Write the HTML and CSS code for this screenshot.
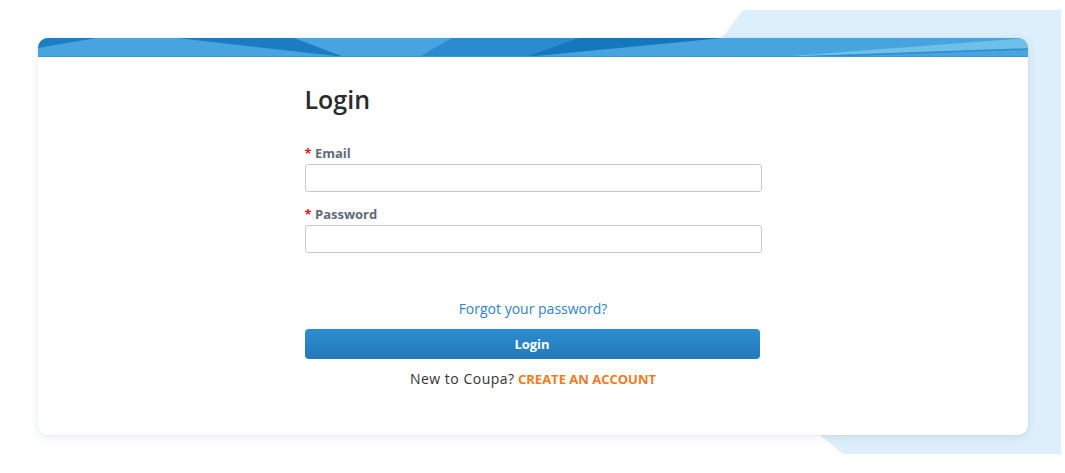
FILE: index.html
```html
<!DOCTYPE html>
<html lang="en">
<head>
<meta charset="utf-8">
<title>Login</title>
<link rel="stylesheet" href="styles.css">
</head>
<body>
<svg class="backdrop" width="1065" height="473" viewBox="0 0 1065 473" aria-hidden="true">
  <polygon points="743,10 1061,10 1061,454 843,454 700,336 722,38" fill="#ddeffa"/>
</svg>
<main class="card">
  <div class="band">
    <svg width="990" height="19" viewBox="0 0 990 19" preserveAspectRatio="none" aria-hidden="true">
      <rect x="0" y="0" width="990" height="19" fill="#48a4de"/>
      <polygon points="0,0 58,0 0,10" fill="#1c7ec3"/>
      <polygon points="139,0 256,0 306,19" fill="#1b7cc1"/>
      <polygon points="414,0 540,0 487,19 381,19" fill="#2a8cce"/>
      <polygon points="540,0 685,0 487,19" fill="#1578bd"/>
      <polygon points="740,19 990,0 990,11" fill="#6fc0e8"/>
      <polyline points="760,19 990,11" fill="none" stroke="#2b8bcc" stroke-width="1.5"/>
      <rect x="0" y="18" width="990" height="1" fill="#3a98d6"/>
    </svg>
  </div>
  <div class="content">
    <h1 class="title">Login</h1>
    <form class="form">
      <div class="field">
        <label class="label" for="email"><span class="req">*</span> Email</label>
        <input class="input" id="email" type="text">
      </div>
      <div class="field field-second">
        <label class="label" for="password"><span class="req">*</span> Password</label>
        <input class="input" id="password" type="password">
      </div>
      <a class="forgot" href="#">Forgot your password?</a>
      <button class="btn" type="button">Login</button>
      <p class="signup"><span class="new">New to Coupa?</span> <a class="create" href="#">CREATE AN ACCOUNT</a></p>
    </form>
  </div>
</main>
</body>
</html>
```

FILE: styles.css
```css
html, body {
  margin: 0;
  padding: 0;
  background: #ffffff;
}

body {
  position: relative;
  width: 1065px;
  height: 473px;
  overflow: hidden;
  font-family: "Open Sans", "Liberation Sans", sans-serif;
  color: #333333;
  padding-top: 38px;
  box-sizing: border-box;
}

.backdrop {
  position: absolute;
  left: 0;
  top: 0;
  z-index: 0;
}

.card {
  position: relative;
  z-index: 1;
  margin-left: 38px;
  width: 990px;
  height: 397px;
  background: #ffffff;
  border-radius: 10px;
  overflow: hidden;
  box-shadow: 0 2px 10px rgba(40, 60, 90, 0.10), 0 0 3px rgba(0, 0, 0, 0.04);
}

.band svg {
  display: block;
}

.content {
  width: 457px;
  margin: 0 auto;
  padding-top: 27px;
}

.title {
  margin: 0;
  font-size: 25px;
  line-height: 30px;
  font-weight: 600;
  color: #2b2b2b;
}

.form {
  margin-top: 31px;
  display: flex;
  flex-direction: column;
}

.field {
  display: flex;
  flex-direction: column;
}

.field-second {
  margin-top: 14px;
}

.label {
  font-size: 13px;
  line-height: 16px;
  font-weight: 700;
  color: #5c6b7e;
  margin-bottom: 3px;
}

.req {
  color: #e8141b;
}

.input {
  box-sizing: border-box;
  width: 457px;
  height: 28px;
  margin: 0;
  border: 1px solid #c9c9c9;
  border-radius: 3px;
  background: #ffffff;
  font-family: inherit;
  font-size: 13px;
  padding: 0 8px;
}

.forgot {
  align-self: center;
  margin-top: 46px;
  font-size: 14px;
  line-height: 20px;
  font-weight: 500;
  color: #2d85c7;
  text-decoration: none;
}

.btn {
  margin-top: 10px;
  width: 455px;
  height: 30px;
  border: 0;
  border-radius: 4px;
  background: linear-gradient(#2b8ed0, #2479b9);
  color: #ffffff;
  font-family: inherit;
  font-size: 13px;
  font-weight: 700;
  padding: 0;
  cursor: pointer;
}

.signup {
  margin: 10px 0 0;
  text-align: center;
  font-size: 13px;
  line-height: 20px;
  color: #333333;
}

.new {
  font-size: 14px;
  letter-spacing: 0.5px;
}

.create {
  color: #f47a22;
  font-weight: 700;
  text-decoration: none;
}
```
